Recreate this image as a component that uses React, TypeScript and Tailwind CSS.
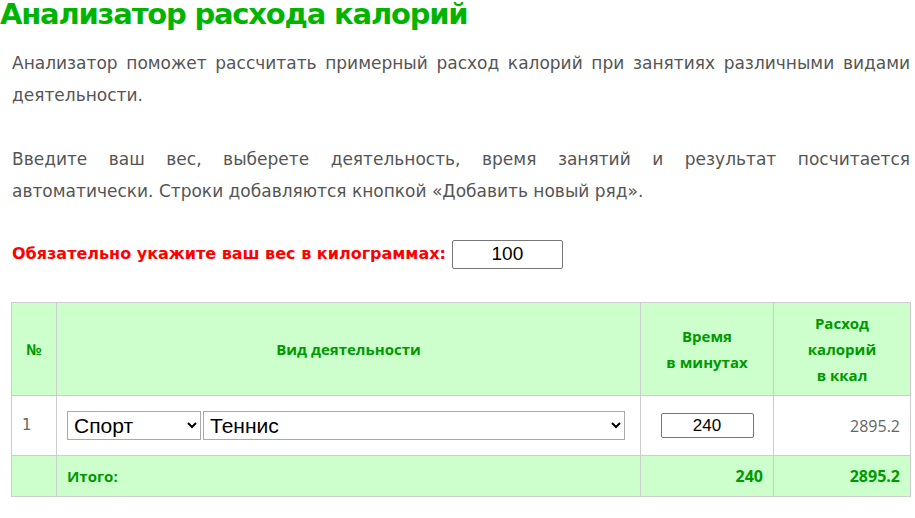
import { useState } from 'react';

const headCell = "border border-[#cccccc] bg-[#ccffcc] text-[#009900] font-bold text-[15px] leading-[26px] text-center font-['Open_Sans',sans-serif]";

export default function App() {
    const [weight, setWeight] = useState("100");
    const [minutes, setMinutes] = useState("240");

    const total = "2895.2";

    return (
        <div className="w-[915px] h-[518px] overflow-hidden bg-white font-['DejaVu_Sans',sans-serif]">
            <h1 className="-mt-[6px] text-[29px] leading-[40px] font-bold text-[#00b400] tracking-[-1.2px]">
                Анализатор расхода калорий
            </h1>

            <div className="pl-3 pr-[5px] text-[17px] leading-[32px] text-[#555555] text-justify">
                <p className="mt-[13px] [word-spacing:-1.5px]">
                    Анализатор поможет рассчитать примерный расход калорий при занятиях различными видами деятельности.
                </p>
                <p className="mt-8">
                    Введите ваш вес, выберете деятельность, время занятий и результат посчитается автоматически. Строки добавляются кнопкой «Добавить новый ряд».
                </p>

                <div className="mt-[31px] flex items-center gap-[6px] text-left">
                    <span className="text-[#ff0000] font-bold text-[16px]">Обязательно укажите ваш вес в килограммах:</span>
                    <input
                        value={weight}
                        onChange={(e) => setWeight(e.target.value)}
                        className="w-[111px] h-[29px] border border-[#767676] rounded-[2px] text-center text-black text-[19px] font-['Liberation_Sans',sans-serif]"
                    />
                </div>
            </div>

            <table className="ml-[11px] mt-[32px] w-[900px] border-collapse">
                <thead>
                    <tr className="h-[93px]">
                        <th className={`${headCell} w-[45px]`}>№</th>
                        <th className={headCell}>Вид деятельности</th>
                        <th className={`${headCell} w-[133px]`}>Время<br />в минутах</th>
                        <th className={`${headCell} w-[137px]`}>Расход<br />калорий<br />в ккал</th>
                    </tr>
                </thead>
                <tbody>
                    <tr className="h-[60px]">
                        <td className="border border-[#cccccc] pl-[10px] text-[15px] text-[#666666]">1</td>
                        <td className="border border-[#cccccc] px-[10px]">
                            <div className="flex gap-[2px] font-['Liberation_Sans',sans-serif] text-[21px] text-black">
                                <select className="w-[134px] h-[29px] border border-[#a9a9a9] pl-[2px]" defaultValue="sport">
                                    <option value="sport">Спорт</option>
                                </select>
                                <select className="w-[422px] h-[29px] border border-[#a9a9a9] pl-[2px]" defaultValue="tennis">
                                    <option value="tennis">Теннис</option>
                                </select>
                            </div>
                        </td>
                        <td className="border border-[#cccccc] text-center">
                            <input
                                value={minutes}
                                onChange={(e) => setMinutes(e.target.value)}
                                className="w-[93px] h-[25px] border border-[#767676] rounded-[2px] text-center text-black text-[17px] font-['Liberation_Sans',sans-serif]"
                            />
                        </td>
                        <td className="border border-[#cccccc] pr-[10px] text-right text-[16px] text-[#666666] font-['Open_Sans',sans-serif]">{total}</td>
                    </tr>
                </tbody>
                <tfoot>
                    <tr className="h-[41px] bg-[#ccffcc] text-[#009900] font-bold text-[16px] font-['Open_Sans',sans-serif]">
                        <td className="border border-[#cccccc]"></td>
                        <td className="border border-[#cccccc] pl-[10px] text-[15px]">Итого:</td>
                        <td className="border border-[#cccccc] pr-[10px] text-right">{minutes}</td>
                        <td className="border border-[#cccccc] pr-[10px] text-right">{total}</td>
                    </tr>
                </tfoot>
            </table>
        </div>
    );
}
